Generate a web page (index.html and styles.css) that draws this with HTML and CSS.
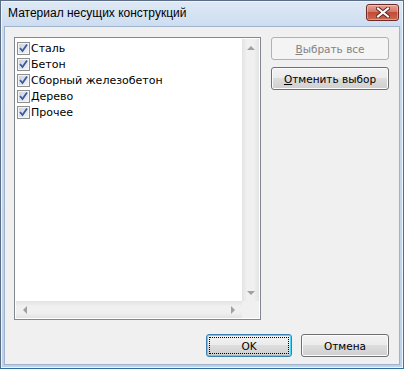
FILE: index.html
```html
<!DOCTYPE html>
<html lang="ru">
<head>
    <meta charset="UTF-8">
    <title>Материал несущих конструкций</title>
    <link rel="stylesheet" href="styles.css">
</head>
<body>
    <div class="window">
        <div class="titlebar">
            <span class="title">Материал несущих конструкций</span>
            <button class="close-btn" aria-label="Закрыть">
                <svg width="14" height="11" viewBox="0 0 14 11">
                    <path d="M2 1.5 L12 9.5 M12 1.5 L2 9.5" stroke="#5a2a26" stroke-width="4" stroke-linecap="square"/>
                    <path d="M2 1.5 L12 9.5 M12 1.5 L2 9.5" stroke="#ffffff" stroke-width="2" stroke-linecap="square"/>
                </svg>
            </button>
        </div>

        <div class="client">
            <div class="main-row">
                <div class="listbox">
                    <div class="list-view">
                        <ul class="items">
                            <li><span class="check"></span>Сталь</li>
                            <li><span class="check"></span>Бетон</li>
                            <li><span class="check"></span>Сборный железобетон</li>
                            <li><span class="check"></span>Дерево</li>
                            <li><span class="check"></span>Прочее</li>
                        </ul>
                        <div class="vscroll">
                            <span class="arrow arrow-up"></span>
                            <span class="arrow arrow-down"></span>
                        </div>
                    </div>
                    <div class="hscroll-row">
                        <div class="hscroll">
                            <span class="arrow arrow-left"></span>
                            <span class="arrow arrow-right"></span>
                        </div>
                        <div class="corner"></div>
                    </div>
                </div>

                <div class="side-buttons">
                    <button class="btn" disabled><u>В</u>ыбрать все</button>
                    <button class="btn"><u>О</u>тменить выбор</button>
                </div>
            </div>

            <div class="footer">
                <button class="btn btn-default"><span class="focus">OK</span></button>
                <button class="btn btn-cancel">Отмена</button>
            </div>
        </div>
    </div>
</body>
</html>
```

FILE: styles.css
```css
* {
    box-sizing: border-box;
}
body {
    margin: 0;
    font-family: "DejaVu Sans", Verdana, sans-serif;
    font-size: 11px;
    color: #000;
    background: #ffffff;
}
.window {
    width: 404px;
    height: 369px;
    display: flex;
    flex-direction: column;
    border: 1px solid #5a6d84;
    border-bottom-color: #2f6f9c;
    background: linear-gradient(#dfe9f5, #c9daef 30px, #bcd2ec);
    padding: 0 3px 3px 3px;
    box-shadow: inset 0 0 0 1px #eef4fb;
}
.titlebar {
    height: 25px;
    display: flex;
    align-items: center;
    justify-content: space-between;
    padding-left: 4px;
}
.title {
    font-family: "Liberation Sans", Arial, sans-serif;
    font-size: 12px;
    color: #000;
    padding-bottom: 2px;
}
.close-btn {
    width: 33px;
    height: 17px;
    margin-right: 1px;
    margin-top: -3px;
    padding: 0;
    border: 1px solid #6b2b26;
    border-radius: 3px;
    background: linear-gradient(#e4a293, #d3796a 45%, #c24a36 50%, #cb6a50);
    box-shadow: inset 0 0 0 1px rgba(255, 255, 255, 0.35);
    display: flex;
    align-items: center;
    justify-content: center;
}
.client {
    flex: 1;
    background: #f0f0f0;
    border: 1px solid #9fb4cc;
    padding: 10px 10px 0 9px;
    display: flex;
    flex-direction: column;
}
.main-row {
    display: flex;
    gap: 10px;
    height: 283px;
}
.listbox {
    width: 247px;
    height: 283px;
    border: 1px solid #828790;
    background: #ffffff;
    display: flex;
    flex-direction: column;
    padding: 1px;
}
.list-view {
    flex: 1;
    display: flex;
}
.items {
    flex: 1;
    list-style: none;
    margin: 0;
    padding: 1px 0 0 1px;
}
.items li {
    height: 16px;
    display: flex;
    align-items: center;
    white-space: nowrap;
}
.check {
    width: 13px;
    height: 13px;
    margin-right: 1px;
    border: 1px solid #8e8f8f;
    background:
        url("data:image/svg+xml,%3Csvg xmlns='http://www.w3.org/2000/svg' width='11' height='11'%3E%3Cpath d='M2 5 L4.5 8 L9 1.5' fill='none' stroke='%233c5aa0' stroke-width='1.8'/%3E%3C/svg%3E") center / 11px 11px no-repeat,
        linear-gradient(135deg, #cbcfd5, #f6f6f6);
    box-shadow: inset 0 0 0 1px #f4f4f4;
}
.vscroll {
    width: 17px;
    background: linear-gradient(90deg, #e3e3e3, #f0f0f0 30%, #f0f0f0 70%, #e3e3e3);
    display: flex;
    flex-direction: column;
    justify-content: space-between;
    align-items: center;
    padding: 7px 0 6px;
}
.hscroll-row {
    height: 17px;
    display: flex;
}
.hscroll {
    flex: 1;
    background: linear-gradient(#e3e3e3, #f0f0f0 30%, #f0f0f0 70%, #e3e3e3);
    display: flex;
    justify-content: space-between;
    align-items: center;
    padding: 0 7px 0 7px;
}
.corner {
    width: 17px;
    background: #f0f0f0;
}
.arrow {
    width: 0;
    height: 0;
    border: 4px solid transparent;
}
.arrow-up {
    border-top: 0;
    border-bottom-color: #a0a0a0;
}
.arrow-down {
    border-bottom: 0;
    border-top-color: #a0a0a0;
}
.arrow-left {
    border-left: 0;
    border-right-color: #a0a0a0;
}
.arrow-right {
    border-right: 0;
    border-left-color: #a0a0a0;
}
.side-buttons {
    display: flex;
    flex-direction: column;
    gap: 7px;
}
.btn {
    width: 118px;
    height: 23px;
    padding: 0;
    font-family: inherit;
    font-size: 10.5px;
    font-weight: normal;
    color: #000;
    border: 1px solid #707070;
    border-radius: 3px;
    background: linear-gradient(#f2f2f2, #ebebeb 49%, #dddddd 50%, #cfcfcf);
    box-shadow: inset 0 0 0 1px #fcfcfc;
}
.btn u {
    text-decoration: underline;
}
.btn:disabled {
    color: #838383;
    border-color: #adb2b5;
    background: #f4f4f4;
    box-shadow: none;
}
.footer {
    display: flex;
    justify-content: flex-end;
    gap: 9px;
    margin-top: 14px;
}
.btn-default {
    width: 86px;
    border-color: #3c7fb1;
    padding: 2px;
    box-shadow: inset 0 0 0 1px #48d8fb;
}
.focus {
    display: flex;
    align-items: center;
    justify-content: center;
    height: 100%;
    border: 1px dotted #000;
}
.btn-cancel {
    width: 88px;
}
```
